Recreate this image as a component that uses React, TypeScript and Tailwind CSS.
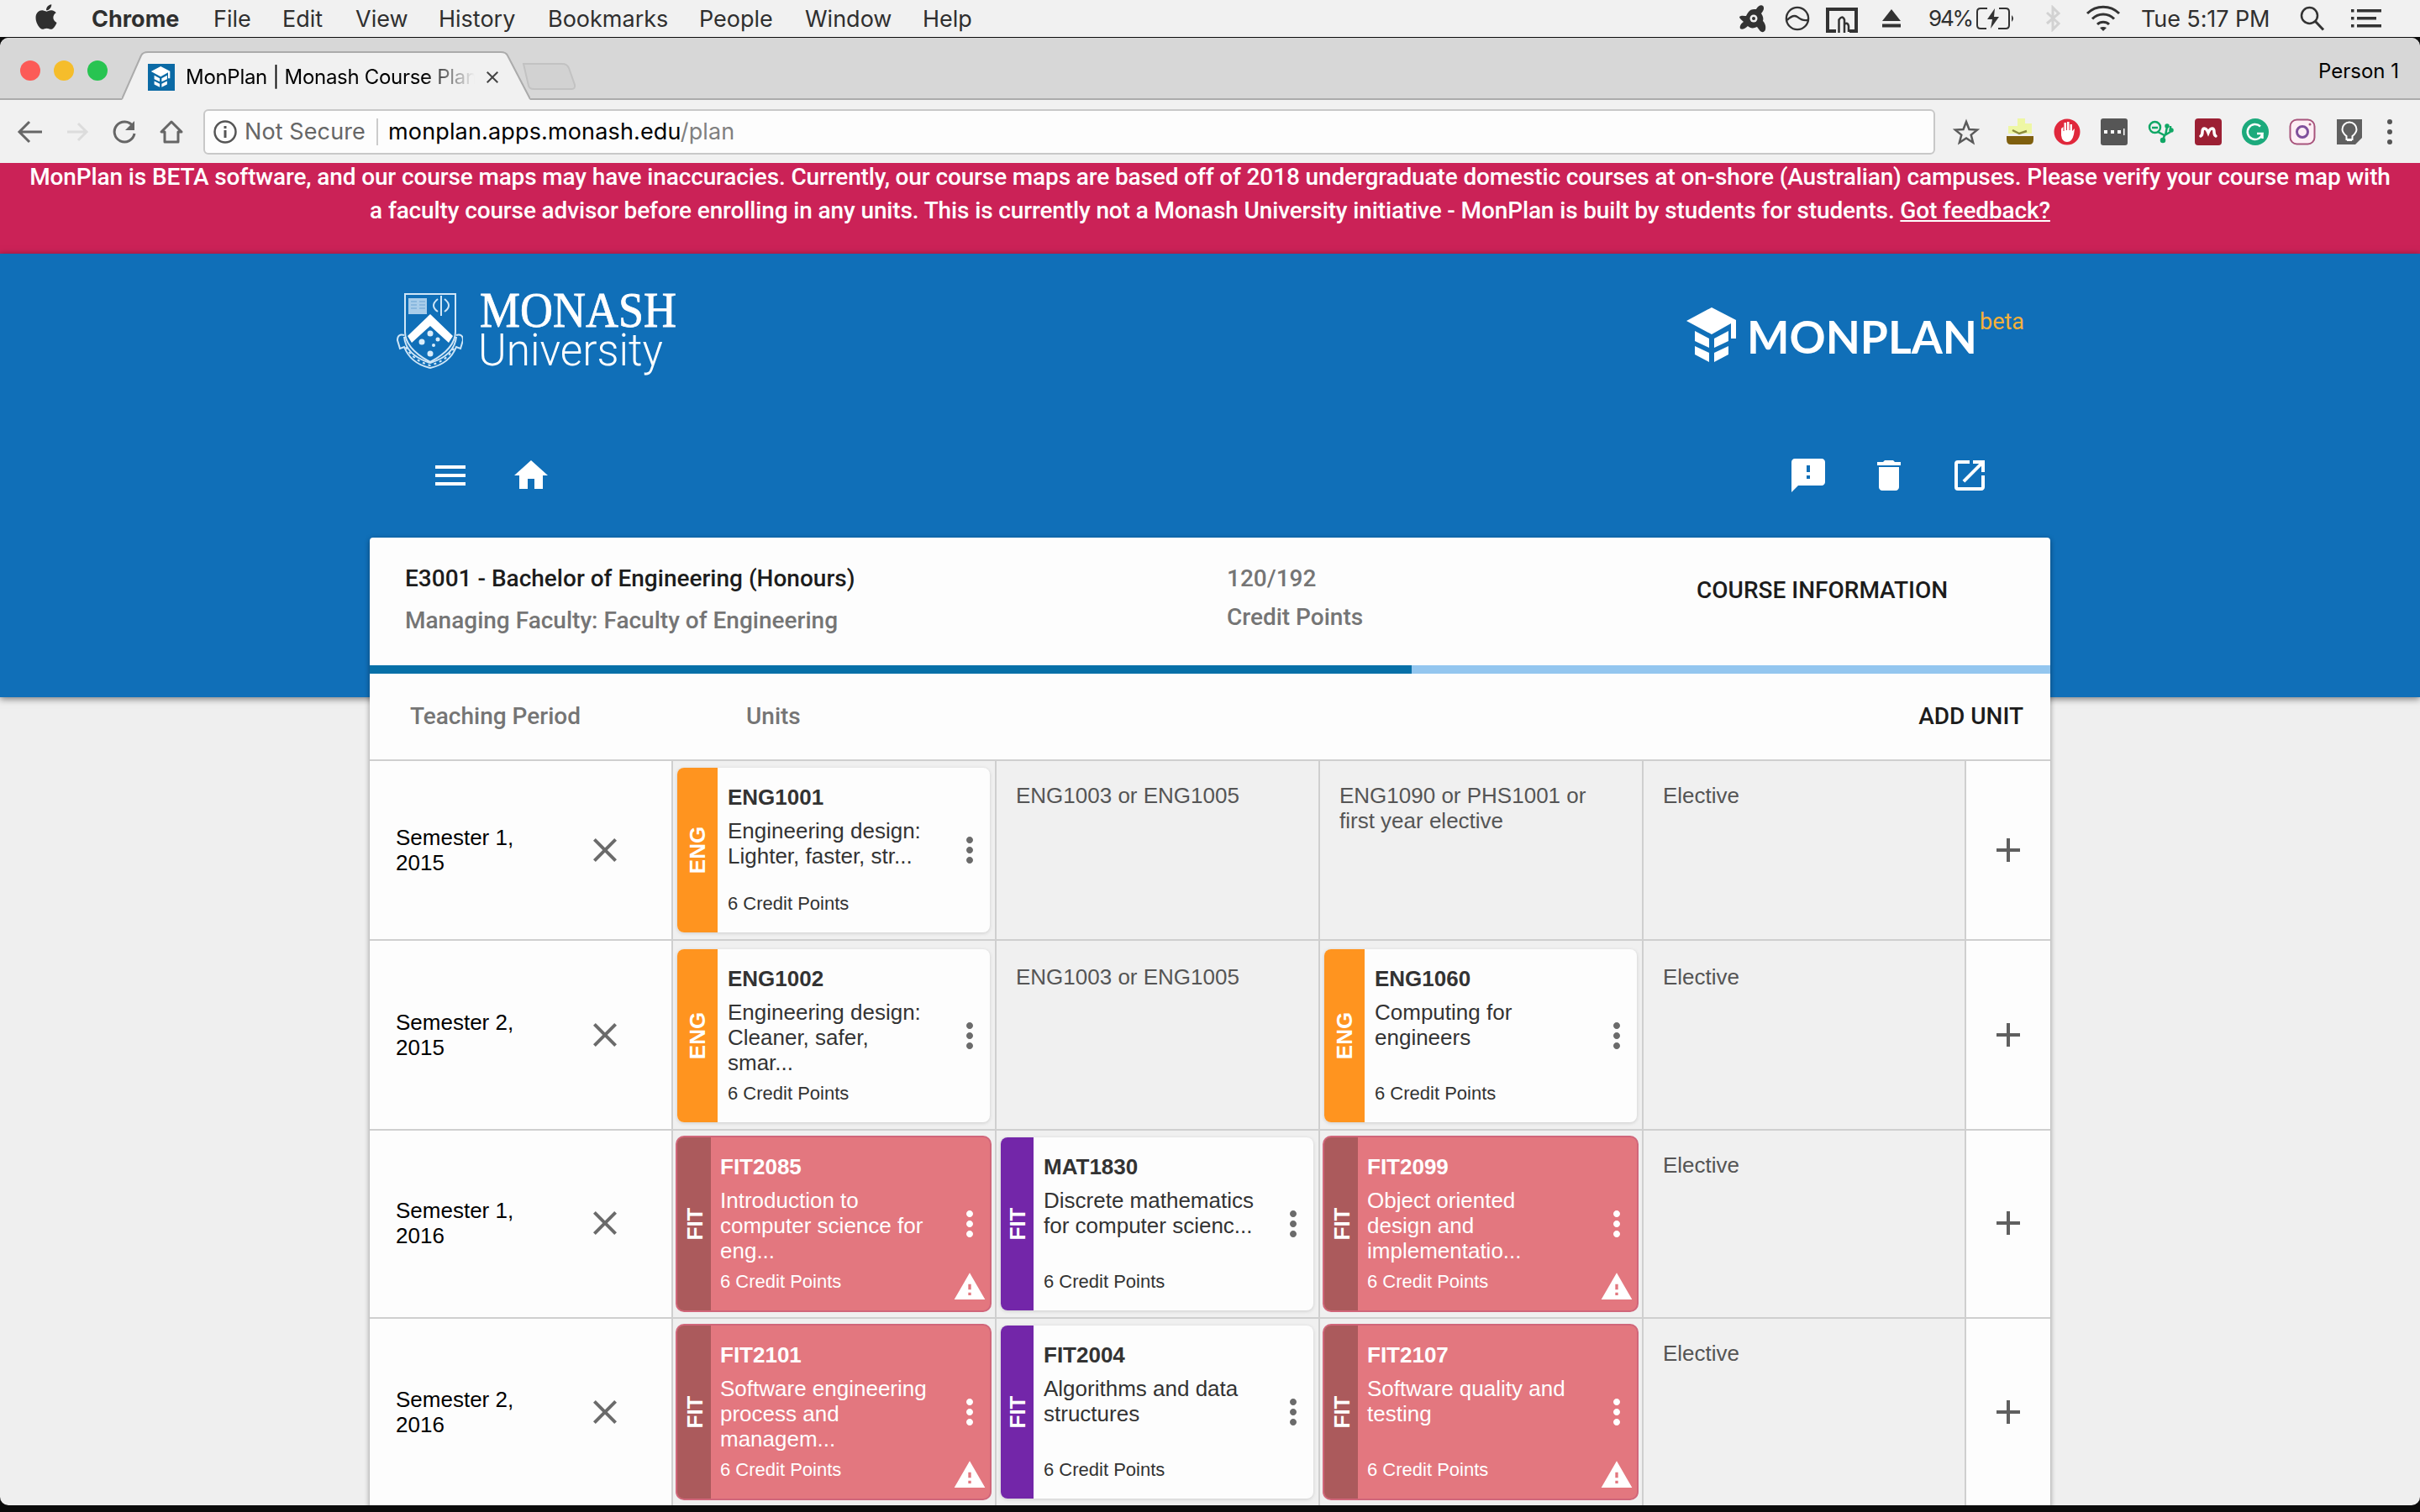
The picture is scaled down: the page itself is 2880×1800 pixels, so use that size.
import React from "react";
import { FaApple } from "react-icons/fa";
import {
  MdAdd,
  MdClose,
  MdDelete,
  MdFeedback,
  MdHome,
  MdMenu,
  MdMoreVert,
  MdOpenInNew,
  MdWarning,
} from "react-icons/md";

type Unit = {
  code: string;
  title: string[];
  faculty: "ENG" | "FIT";
  error?: boolean;
};
type Slot = { unit?: Unit; placeholder?: string[] };
type Row = {
  period: string[];
  height: string;
  pad: string;
  cardPad: string;
  cardHeight: string;
  sidePad: string;
  slots: Slot[];
};

const elective: Slot = { placeholder: ["Elective"] };

const rows: Row[] = [
  {
    period: ["Semester 1,", "2015"],
    height: "h-[214px]",
    pad: "pt-[26px]",
    cardPad: "pt-2",
    cardHeight: "h-[196px]",
    sidePad: "pb-0",
    slots: [
      { unit: { code: "ENG1001", title: ["Engineering design:", "Lighter, faster, str..."], faculty: "ENG" } },
      { placeholder: ["ENG1003 or ENG1005"] },
      { placeholder: ["ENG1090 or PHS1001 or", "first year elective"] },
      elective,
    ],
  },
  {
    period: ["Semester 2,", "2015"],
    height: "h-[226px]",
    pad: "pt-[28px]",
    cardPad: "pt-2.5",
    cardHeight: "h-[206px]",
    sidePad: "pb-0",
    slots: [
      { unit: { code: "ENG1002", title: ["Engineering design:", "Cleaner, safer,", "smar..."], faculty: "ENG" } },
      { placeholder: ["ENG1003 or ENG1005"] },
      { unit: { code: "ENG1060", title: ["Computing for", "engineers"], faculty: "ENG" } },
      elective,
    ],
  },
  {
    period: ["Semester 1,", "2016"],
    height: "h-[224px]",
    pad: "pt-[26px]",
    cardPad: "pt-2",
    cardHeight: "h-[206px]",
    sidePad: "pb-[3px]",
    slots: [
      { unit: { code: "FIT2085", title: ["Introduction to", "computer science for", "eng..."], faculty: "FIT", error: true } },
      { unit: { code: "MAT1830", title: ["Discrete mathematics", "for computer scienc..."], faculty: "FIT" } },
      { unit: { code: "FIT2099", title: ["Object oriented", "design and", "implementatio..."], faculty: "FIT", error: true } },
      elective,
    ],
  },
  {
    period: ["Semester 2,", "2016"],
    height: "h-[227px]",
    pad: "pt-[26px]",
    cardPad: "pt-2",
    cardHeight: "h-[206px]",
    sidePad: "pb-[3px]",
    slots: [
      { unit: { code: "FIT2101", title: ["Software engineering", "process and", "managem..."], faculty: "FIT", error: true } },
      { unit: { code: "FIT2004", title: ["Algorithms and data", "structures"], faculty: "FIT" } },
      { unit: { code: "FIT2107", title: ["Software quality and", "testing"], faculty: "FIT", error: true } },
      elective,
    ],
  },
];

function Lines({ lines }: { lines: string[] }) {
  return (
    <>
      {lines.map((l) => (
        <div key={l} className="whitespace-nowrap">
          {l}
        </div>
      ))}
    </>
  );
}

function UnitCard({ unit, height }: { unit: Unit; height: string }) {
  const tab = unit.error ? "bg-[#ab5a5c]" : unit.faculty === "ENG" ? "bg-[#ff941f]" : "bg-[#7326a9]";
  const tabWidth = unit.faculty === "ENG" ? "w-[48px]" : unit.error ? "w-[40px]" : "w-[39px]";
  const gap = unit.error ? "pl-[11px]" : "pl-3";
  const body = unit.error
    ? "bg-[#e3777f] text-white ring-2 ring-[#d0667a]"
    : "bg-[#fdfdfd] text-[#333] shadow-[0_1px_4px_rgba(0,0,0,0.15)]";
  return (
    <div className={`relative mr-1.5 ml-[5px] flex rounded-lg ${height} ${body}`}>
      <div className={`flex shrink-0 items-center justify-center rounded-l-lg ${tab} ${tabWidth}`}>
        <span className="-rotate-90 text-[26px] leading-none font-bold text-white">{unit.faculty}</span>
      </div>
      <div className={`flex grow flex-col pt-5 pb-[22px] ${gap}`}>
        <div className="text-[26px] leading-[30px] font-bold">{unit.code}</div>
        <div className="mt-2.5 text-[26px] leading-[30px]">
          <Lines lines={unit.title} />
        </div>
        <div className="mt-auto text-[22px] leading-[24px]">6 Credit Points</div>
      </div>
      <MdMoreVert className={`absolute top-1/2 right-0 -mt-6 size-12 ${unit.error ? "text-white" : "text-[#6b6b6b]"}`} />
      {unit.error && <MdWarning className="absolute right-[4px] bottom-[8px] size-[40px] text-white" />}
    </div>
  );
}

function PlanRow({ row }: { row: Row }) {
  return (
    <div
      className={`grid shrink-0 grid-cols-[359px_385px_385px_385px_384px_102px] border-t-2 border-[#cfcfcf] ${row.height}`}
    >
      <div className={`flex items-center pr-[55px] pl-[31px] text-black ${row.sidePad}`}>
        <div className="grow text-[26px] leading-[30px]">
          <Lines lines={row.period} />
        </div>
        <MdClose className="size-12 text-[#6b6b6b]" />
      </div>
      {row.slots.map((s, i) => (
        <div key={i} className="border-l-2 border-[#cfcfcf] bg-[#f0f0f0]">
          {s.unit ? (
            <div className={row.cardPad}>
              <UnitCard unit={s.unit} height={row.cardHeight} />
            </div>
          ) : (
            <div className={`pl-[23px] text-[26px] leading-[30px] text-[#555] ${row.pad}`}>
              <Lines lines={s.placeholder ?? []} />
            </div>
          )}
        </div>
      ))}
      <div className={`flex items-center justify-center border-l-2 border-[#cfcfcf] ${row.sidePad}`}>
        <MdAdd className="size-12 text-[#5f5f5f]" />
      </div>
    </div>
  );
}

function MacMenuBar() {
  return (
    <div className="flex h-[44px] shrink-0 items-center bg-[#f1f1f1] font-['Inter'] text-[27px] leading-none text-[#2f2f2f]">
      <FaApple className="ml-[38px] size-[34px] -translate-y-0.5" />
      <div className="ml-[37px] flex">
        <span className="w-[145px] font-bold">Chrome</span>
        <span className="w-[82px]">File</span>
        <span className="w-[87px]">Edit</span>
        <span className="w-[99px]">View</span>
        <span className="w-[130px]">History</span>
        <span className="w-[180px]">Bookmarks</span>
        <span className="w-[126px]">People</span>
        <span className="w-[140px]">Window</span>
        <span>Help</span>
      </div>
      <div className="mr-[44px] ml-auto flex items-center">
        <svg viewBox="0 0 34 34" className="size-[34px]" fill="#333">
          <path d="M13 8c2-2 5-2 8-2 2-4 6-6 8-4s1 6-2 9c2 3 3 6 2 9 2 2 4 6 3 10-1 4-5 4-7 1l-3-4c-4 2-8 2-11-1-3 3-7 5-9 3-1-3 1-6 4-8-2-2-5-4-5-6 2-2 6-1 8-1 1-2 2-4 4-6Z" />
          <circle cx="18" cy="17" r="4.5" fill="#f1f1f1" />
          <circle cx="18" cy="17" r="2" />
        </svg>
        <svg viewBox="0 0 32 32" className="ml-[21px] size-[30px]" fill="none" stroke="#333" strokeWidth="2.500">
          <circle cx="16" cy="16" r="14" />
          <path d="M3 18c5-5 9-7 13-4s7 5 13 4" />
        </svg>
        <svg viewBox="0 0 38 30" className="mt-[4px] ml-[19px] h-[30px] w-[38px]" fill="none" stroke="#333" strokeWidth="4">
          <path d="M12 28H2V2h34v26h-8" />
          <path d="M15.500 30V14.500q4-6 6.500 0V30M22 20q4-3 5 2v7" strokeWidth="2.500" />
        </svg>
        <svg viewBox="0 0 24 22" className="ml-[28px] h-[22px] w-[24px]" fill="#333">
          <path d="M12 0 23 14H1Z" />
          <path d="M1 17.500h22v4H1Z" />
        </svg>
        <span className="ml-[32px] w-[57px] text-[26px] tracking-[-2.2px]">94%</span>
        <svg viewBox="0 0 46 26" className="-mr-[6px] h-[26px] w-[46px]" fill="none" stroke="#333" strokeWidth="2">
          <path d="M13 1H5Q1 1 1 5v16q0 4 4 4h7M27 1h8q4 0 4 4v16q0 4-4 4h-9" />
          <path d="m22 1-9 13h6l-2 11 10-14h-6Z" fill="#333" stroke="none" />
          <path d="M42 9q4 4 0 8Z" fill="#333" stroke="none" />
        </svg>
        <svg viewBox="0 0 20 32" className="ml-[41px] h-[32px] w-[20px]" fill="none" stroke="#d2d2d2" strokeWidth="3">
          <path d="m3 9 14 13-7 7V3l7 7L3 22" />
        </svg>
        <svg viewBox="0 0 42 32" className="ml-[29px] h-[32px] w-[42px]" fill="none" stroke="#333" strokeWidth="3">
          <path d="M2 10a27 27 0 0 1 38 0M8 16.500a18 18 0 0 1 26 0M14 23a10 10 0 0 1 14 0" />
          <path d="m17 27 4 4 4-4q-4-2-8 0Z" fill="#333" stroke="none" />
        </svg>
        <span className="ml-[24px] w-[189px] tracking-[-0.1px]">Tue 5:17 PM</span>
        <svg viewBox="0 0 30 30" className="size-[30px]" fill="none" stroke="#333" strokeWidth="2.500">
          <circle cx="11.500" cy="11.500" r="9.500" />
          <path d="m18.500 18.500 9.500 10" strokeWidth="3" />
        </svg>
        <svg viewBox="0 0 38 22" className="ml-[31px] h-[22px] w-[38px]" fill="#333">
          <path d="M0 0h3.500v3.500H0zM7 0h29v3.500H7zM0 9h3.500v3.500H0zM7 9h23v3.500H7zM0 18h3.500v3.500H0zM7 18h29v3.500H7z" />
        </svg>
      </div>
    </div>
  );
}

function TabStrip() {
  return (
    <div className="relative flex h-[74px] shrink-0 items-center rounded-t-[10px] border-b-2 border-[#ababab] bg-[#d7d7d7] pt-[5px] font-['Inter'] text-black">
      <div className="ml-[24px] flex gap-[16px]">
        <span className="size-[24px] rounded-full bg-[#fc5b57]" />
        <span className="size-[24px] rounded-full bg-[#f5bd2b]" />
        <span className="size-[24px] rounded-full bg-[#28c451]" />
      </div>
      <div className="relative -mb-[2px] ml-[17px] flex h-[58px] w-[486px] items-center self-end pt-[3px] pl-[31px]">
        <svg viewBox="0 0 486 58" className="absolute inset-0 h-[58px] w-[486px]">
          <path d="M0 58 23 5Q25 1 31 1H451Q457 1 459 5L486 58Z" fill="#f1f1f1" />
          <path d="M0 57 23 5Q25 1 31 1H451Q457 1 459 5L486 57" fill="none" stroke="#ababab" strokeWidth="2" />
        </svg>
        <span className="relative flex size-[32px] items-center justify-center bg-[#0b6aa5]">
          <svg viewBox="0 0 64 68" className="size-[26px]" fill="white">
            <HatShapes />
          </svg>
        </span>
        <span className="relative ml-[13px] w-[344px] overflow-hidden bg-linear-to-r from-black from-82% to-transparent to-100% bg-clip-text text-[24px] leading-[32px] tracking-[-0.3px] whitespace-nowrap text-transparent">
          MonPlan | Monash Course Planner
        </span>
        <MdClose className="relative ml-[9px] size-[24px] text-[#444]" />
      </div>
      <svg viewBox="0 0 66 32" className="mt-[14px] -ml-[10px] h-[32px] w-[66px]">
        <path d="M2 1h46q6 0 8 5l7 20q1 5-4 5H14q-5 0-6-4Z" fill="#d2d2d2" stroke="#c2c2c2" strokeWidth="2" />
      </svg>
      <span className="mt-[2px] mr-[25px] ml-auto text-[24px]">Person 1</span>
    </div>
  );
}

function Extensions() {
  return (
    <div className="flex items-center gap-[24px]">
      <svg viewBox="0 0 32 32" className="size-[32px]">
        <path d="M13 0h9v6h8v12H2V9h11Z" fill="#eef7a4" />
        <path d="m7 14 8 4 9-3" fill="none" stroke="#8c8c3c" strokeWidth="2.500" />
        <path d="M0 21h32v4q0 6-5 6H5q-5 0-5-6Z" fill="#7f5f0e" />
      </svg>
      <svg viewBox="0 0 32 32" className="size-[32px]">
        <circle cx="16" cy="16" r="14" fill="white" stroke="#e0283c" strokeWidth="3" />
        <path d="M10 3h12l7 7v12l-7 7H10l-7-7V10Z" fill="#e0283c" />
        <path d="M9 12v8q1 8 7 8t8-9l1-7-3 3V7h-2.500v7h-1V4h-2.500v10h-1V5h-2.500v10h-1v-5Z" fill="white" />
      </svg>
      <svg viewBox="0 0 32 32" className="size-[32px]">
        <rect x="0" y="0" width="32" height="32" rx="3" fill="#565656" />
        <path d="M4 14h4v4H4zM12 14h4v4h-4zM20 14h4v4h-4zM27 12h1.500v8H27z" fill="white" />
      </svg>
      <svg viewBox="0 0 32 32" className="size-[32px]" fill="none" stroke="#10a765" strokeWidth="2.500">
        <circle cx="8.500" cy="10.500" r="6.500" />
        <path d="M5 11h7M12 16l8 4 7-4M20 20l-2 6M21 20l2-10M27 16V9" />
        <circle cx="18" cy="26" r="2" fill="#10a765" />
        <circle cx="23" cy="9" r="1.500" fill="#10a765" />
        <circle cx="28" cy="14" r="1.500" fill="#10a765" />
      </svg>
      <svg viewBox="0 0 32 32" className="size-[32px]">
        <rect width="32" height="32" rx="4" fill="#9c2034" />
        <path d="M7 21q2-1 2-5 0-4 2.500-4T16 17q2-5 4.500-5t2.500 4q0 4 2 5" fill="none" stroke="white" strokeWidth="3.500" strokeLinecap="round" />
      </svg>
      <svg viewBox="0 0 32 32" className="size-[32px]">
        <circle cx="16" cy="16" r="16" fill="#1caa7c" />
        <path d="M22 9.500a9 9 0 1 0 2.500 8.500H18M24.500 18v6" fill="none" stroke="white" strokeWidth="2.500" />
      </svg>
      <svg viewBox="0 0 32 32" className="size-[32px]" fill="none">
        <rect x="1.500" y="1.500" width="29" height="29" rx="8" stroke="#a8547c" strokeWidth="2" fill="#fdeff5" />
        <circle cx="16" cy="16" r="6.500" stroke="#80509c" strokeWidth="3" />
        <circle cx="25" cy="7" r="1.500" fill="#a8547c" />
      </svg>
      <svg viewBox="0 0 32 32" className="size-[32px]">
        <path d="M1 1h30v22l-8 8H1Z" fill="#606060" />
        <path d="M12.500 21q-5-4-5-8a8.500 8.500 0 0 1 17 0q0 4-5 8v4h-7Z" fill="none" stroke="white" strokeWidth="2" />
        <path d="M13 25.500h6" stroke="white" strokeWidth="3" />
      </svg>
    </div>
  );
}

function Toolbar() {
  return (
    <div className="flex h-[75px] shrink-0 items-center bg-[#f1f1f1] font-['Inter'] text-[27px] leading-none">
      <svg viewBox="0 0 32 32" className="ml-[20px] size-[32px]" fill="none" stroke="#666" strokeWidth="3">
        <path d="M30 16H4M15 4 3 16l12 12" />
      </svg>
      <svg viewBox="0 0 32 32" className="ml-[24px] size-[32px]" fill="none" stroke="#dcdcdc" strokeWidth="3">
        <path d="M4 16h22M17 6l10 10-10 10" />
      </svg>
      <svg viewBox="0 0 32 32" className="ml-[24px] size-[32px]" fill="none" stroke="#666" strokeWidth="3">
        <path d="M26 9a12 12 0 1 0 2 9" />
        <path d="M28 3v11H17Z" fill="#666" stroke="none" />
      </svg>
      <svg viewBox="0 0 32 32" className="ml-[24px] size-[32px]" fill="none" stroke="#666" strokeWidth="3">
        <path d="M16 4 4 16h4v12h16V16h4Z" strokeLinejoin="round" />
      </svg>
      <div className="ml-[22px] flex h-[54px] w-[2061px] items-center rounded-[6px] border-2 border-[#c8c8c8] bg-[#fdfdfd] pl-[10px]">
        <svg viewBox="0 0 28 28" className="size-[28px]" fill="none" stroke="#555" strokeWidth="2.500">
          <circle cx="14" cy="14" r="12.500" />
          <path d="M14 12v9M14 7v3" strokeWidth="3" />
        </svg>
        <span className="ml-[9px] w-[157px] tracking-[0.1px] text-[#666]">Not Secure</span>
        <span className="h-[32px] w-[2px] bg-[#ccc]" />
        <span className="ml-[12px] tracking-[0.15px] text-black">
          monplan.apps.monash.edu<span className="text-[#808080]">/plan</span>
        </span>
      </div>
      <svg viewBox="0 0 32 32" className="mr-[32px] ml-[21px] size-[32px]" fill="none" stroke="#5a5a5a" strokeWidth="2.500">
        <path d="m16 4 3.500 9 9.500.6-7.300 6 2.400 9.200L16 23.500l-8.100 5.300 2.400-9.200-7.300-6 9.500-.6Z" />
      </svg>
      <Extensions />
      <div className="ml-[29px] flex flex-col gap-[6px]">
        <span className="size-[6px] rounded-full bg-[#555]" />
        <span className="size-[6px] rounded-full bg-[#555]" />
        <span className="size-[6px] rounded-full bg-[#555]" />
      </div>
    </div>
  );
}

function HatShapes() {
  return (
    <>
      <path d="M30 0 59 15v22h-6V19L30 32 0 16Z" />
      <path d="M10 28l17 9v11L10 40ZM10 46l17 8v11L10 56ZM50 28l-17 9v11l17-8ZM50 46l-17 8v11l17-9Z" />
    </>
  );
}

function MonashCrest() {
  return (
    <svg viewBox="0 0 80 90" className="h-[90px] w-[80px]" fill="none" stroke="#cfe6f7" strokeWidth="2">
      <path d="M11 1h60v45q0 20-30 36Q11 66 11 46Z" />
      <path d="M15 6h22v19H15z" fill="#a9cdea" stroke="none" />
      <path d="M18 10h7M18 14h7M18 18h7M28 10h7M28 14h7M28 18h7" stroke="#6aa3d3" strokeWidth="1" />
      <path d="M54 3v24M50 7q-10 8 0 15M58 7q10 8 0 15" />
      <path d="m41 25 27 26-5 8-22-20-22 20-5-8Z" fill="white" stroke="none" />
      <g fill="#d9edfb" stroke="none">
        <circle cx="41" cy="48" r="3.500" />
        <circle cx="31" cy="58" r="3.500" />
        <circle cx="50" cy="55" r="2.500" />
        <circle cx="45" cy="62" r="2" />
        <circle cx="41" cy="72" r="3.500" />
      </g>
      <path d="M10 50q-8-2-8 6l3 10 5-2q8 20 31 25 23-5 31-25l5 2 3-10q0-8-8-6" />
      <path d="M10 52q2 22 31 31 29-9 31-31" />
      <path d="M12 64q8 16 29 22 21-6 29-22" strokeDasharray="3 4" />
    </svg>
  );
}

function SiteHeader() {
  return (
    <div className="flex h-[528px] shrink-0 flex-col bg-[#106fb8] pr-[471px] pl-[471px] text-white shadow-[0_2px_8px_rgba(0,0,0,0.5)]">
      <div className="flex h-[160px] items-start justify-between">
        <div className="flex pt-[47px]">
          <MonashCrest />
          <svg viewBox="0 0 240 102" className="ml-[19px] h-[102px] w-[240px] overflow-visible" fill="white">
            <text
              x="1"
              y="40"
              fontSize="60"
              textLength="234"
              lengthAdjust="spacingAndGlyphs"
              stroke="white"
              strokeWidth="0.800"
              className="font-['Liberation_Serif']"
            >
              MONASH
            </text>
            <text x="-1" y="86" fontSize="54" textLength="220" lengthAdjust="spacingAndGlyphs" className="font-['Roboto'] font-light">
              University
            </text>
          </svg>
        </div>
        <div className="flex pt-[64px]">
          <svg viewBox="0 0 64 68" className="h-[68px] w-[64px]" fill="white">
            <HatShapes />
          </svg>
          <svg viewBox="0 0 277 60" className="ml-[8px] h-[60px] w-[277px] overflow-visible" fill="white">
            <text x="0" y="55" fontSize="54" textLength="274" lengthAdjust="spacingAndGlyphs" className="font-['Lato'] font-bold">
              MONPLAN
            </text>
          </svg>
          <span className="font-['Roboto'] text-[27px] leading-[34px] text-[#f5b03a]">beta</span>
        </div>
      </div>
      <div className="flex items-center justify-between pt-[80px] pr-[41px] pl-[41px]">
        <div className="flex gap-12">
          <MdMenu className="size-12" />
          <MdHome className="size-12" />
        </div>
        <div className="flex gap-12">
          <MdFeedback className="size-12" />
          <MdDelete className="size-12" />
          <MdOpenInNew className="size-12" />
        </div>
      </div>
    </div>
  );
}

export default function App() {
  return (
    <div className="flex h-[1800px] w-[2880px] flex-col overflow-hidden bg-[#0c0c0c] font-['Liberation_Sans',sans-serif]">
      <MacMenuBar />
      <div className="mt-px flex h-[1747px] shrink-0 flex-col overflow-hidden rounded-[10px] bg-[#efefef]">
        <TabStrip />
        <Toolbar />
        <div className="flex h-[108px] shrink-0 flex-col items-center bg-[#cb2257] font-['Roboto'] text-[28px] leading-[40px] font-medium tracking-[-0.13px] whitespace-nowrap text-white">
          <div className="-mt-[3px]">
            MonPlan is BETA software, and our course maps may have inaccuracies. Currently, our course maps are based
            off of 2018 undergraduate domestic courses at on-shore (Australian) campuses. Please verify your course map
            with
          </div>
          <div>
            a faculty course advisor before enrolling in any units. This is currently not a Monash University initiative
            - MonPlan is built by students for students. <span className="underline">Got feedback?</span>
          </div>
        </div>
        <SiteHeader />
        <div className="relative -mt-[190px] ml-[440px] flex w-[2000px] flex-col rounded-t-[4px] bg-[#fdfdfd] shadow-[0_2px_6px_rgba(0,0,0,0.4)]">
          <div className="flex h-[152px] font-['Roboto'] text-[28px] font-medium text-[#757575]">
            <div className="w-[1020px] pt-[29px] pl-[42px]">
              <div className="leading-[40px] text-[#1c1c1c]">E3001 - Bachelor of Engineering (Honours)</div>
              <div className="mt-[10px] leading-[40px]">Managing Faculty: Faculty of Engineering</div>
            </div>
            <div className="w-[559px] pt-[29px]">
              <div className="leading-[40px]">120/192</div>
              <div className="mt-[6px] leading-[40px]">Credit Points</div>
            </div>
            <div className="pt-[43px] leading-[40px] text-[#1c1c1c]">COURSE INFORMATION</div>
          </div>
          <div className="h-[10px] bg-[#93c6ef]">
            <div className="h-full w-[1240px] bg-[#0670a8]" />
          </div>
          <div className="flex h-[102px] items-center pr-[32px] font-['Roboto'] text-[28px] font-medium text-[#757575]">
            <div className="w-[448px] pl-[48px]">Teaching Period</div>
            <div>Units</div>
            <div className="ml-auto text-[#1c1c1c]">ADD UNIT</div>
          </div>
          {rows.map((r) => (
            <PlanRow key={r.period.join(" ")} row={r} />
          ))}
        </div>
      </div>
    </div>
  );
}
